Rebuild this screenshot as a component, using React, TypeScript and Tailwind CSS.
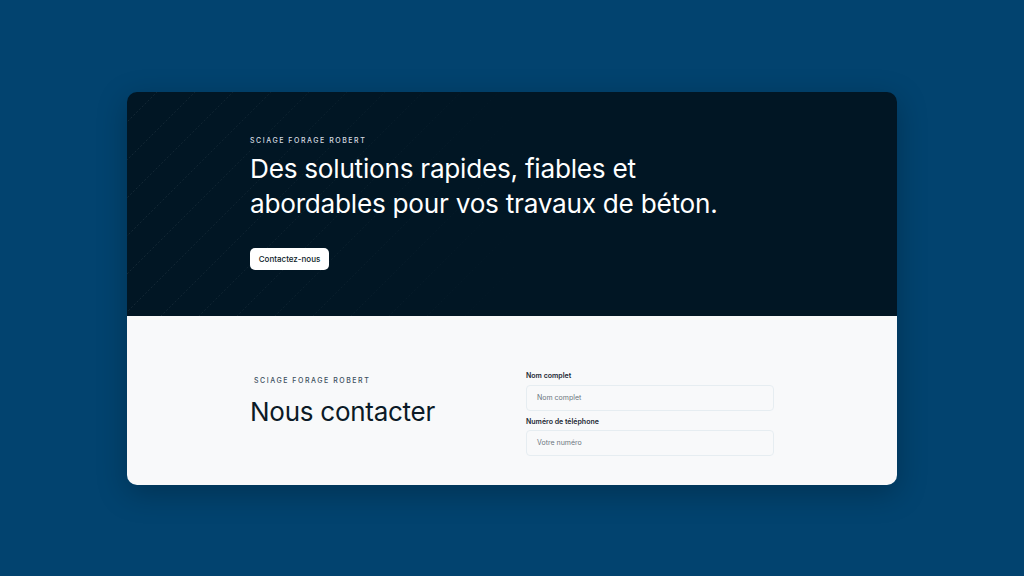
import React from "react";

function Lines() {
  const lines = [];
  for (let i = 0; i < 16; i++) {
    const x = -200 + i * 38;
    lines.push(<line key={i} x1={x} y1={230} x2={x + 230} y2={0} stroke="#ffffff" strokeOpacity="0.12" strokeWidth="0.7" strokeDasharray="2 2" />);
  }
  return (
    <svg className="pointer-events-none absolute left-0 top-0" width="420" height="230" viewBox="0 0 420 230">
      <defs>
        <linearGradient id="fade" x1="0" y1="0" x2="1" y2="0">
          <stop offset="0" stopColor="#fff" stopOpacity="1" />
          <stop offset="1" stopColor="#fff" stopOpacity="0" />
        </linearGradient>
        <mask id="m">
          <rect width="420" height="230" fill="url(#fade)" />
        </mask>
      </defs>
      <g mask="url(#m)">{lines}</g>
    </svg>
  );
}

export default function App() {
  return (
    <div className="flex h-[576px] w-[1024px] items-start justify-center bg-[#02436f] pt-[92px]" style={{ fontFamily: "Inter, 'Noto Sans', sans-serif" }}>
      <div className="w-[770px] overflow-hidden rounded-[10px] shadow-[0_8px_30px_rgba(0,0,0,0.25)]">
        <div className="relative h-[224px] bg-[#011624] pl-[123px] pt-[44px]">
          <Lines />
          <div className="relative">
            <div className="text-[7px] font-medium uppercase leading-[10px] tracking-[0.22em] text-[#d5dbe0]">Sciage Forage Robert</div>
            <h1 className="mt-[5px] text-[26.2px] font-normal leading-[35px] tracking-[-0.01em] text-white">
              Des solutions rapides, fiables et
              <br />
              abordables pour vos travaux de béton.
            </h1>
            <button className="mt-[27px] flex h-[22px] w-[79px] items-center justify-center rounded-[5px] bg-white text-[8px] font-medium text-[#0b1a26]">
              Contactez-nous
            </button>
          </div>
        </div>
        <div className="flex h-[169px] bg-[#f8f9fa] pl-[123px] pt-[55px]">
          <div className="w-[276px] pt-[5px]">
            <div className="pl-[4px] text-[7px] font-medium uppercase leading-[10px] tracking-[0.22em] text-[#3c4f5e]">Sciage Forage Robert</div>
            <h2 className="mt-[10px] text-[26px] font-normal leading-[32px] tracking-[-0.01em] text-[#0b1a26]">Nous contacter</h2>
          </div>
          <div className="flex w-[248px] flex-col">
            <label className="text-[7px] font-semibold leading-[10px] text-[#1a2733]">Nom complet</label>
            <div className="mt-[4px] flex h-[26px] items-center rounded-[4px] border border-[#e6edf1] pl-[10px] text-[7px] text-[#6b7680]">Nom complet</div>
            <label className="mt-[6px] text-[7px] font-semibold leading-[10px] text-[#1a2733]">Numéro de téléphone</label>
            <div className="mt-[3px] flex h-[26px] items-center rounded-[4px] border border-[#e6edf1] pl-[10px] text-[7px] text-[#6b7680]">Votre numéro</div>
          </div>
        </div>
      </div>
    </div>
  );
}
